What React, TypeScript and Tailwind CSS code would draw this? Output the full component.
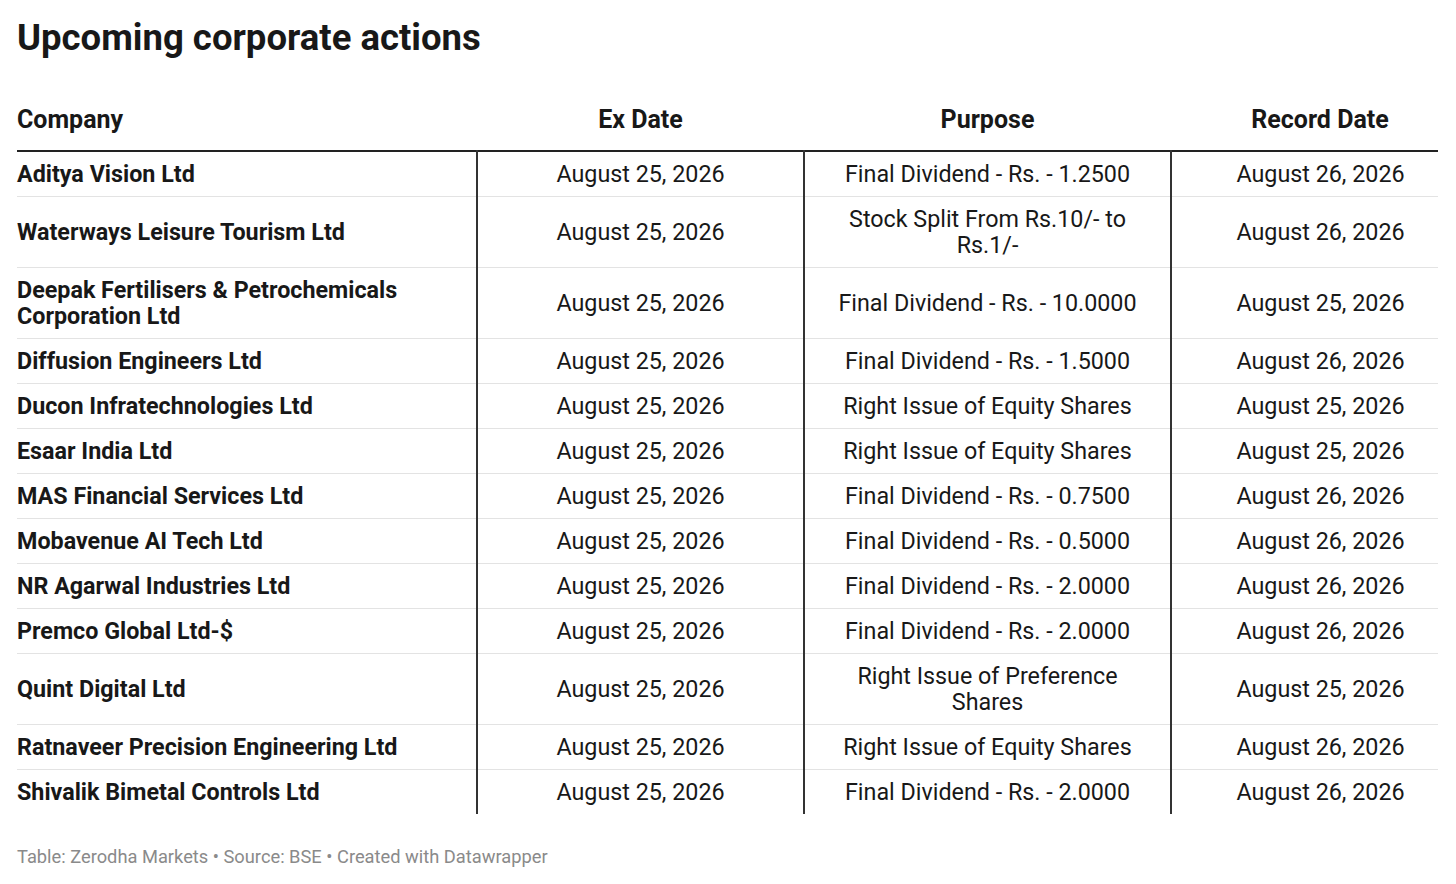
const rows: [string, string, string, string][] = [
  ["Aditya Vision Ltd", "August 25, 2026", "Final Dividend - Rs. - 1.2500", "August 26, 2026"],
  ["Waterways Leisure Tourism Ltd", "August 25, 2026", "Stock Split From Rs.10/- to Rs.1/-", "August 26, 2026"],
  ["Deepak Fertilisers & Petrochemicals Corporation Ltd", "August 25, 2026", "Final Dividend - Rs. - 10.0000", "August 25, 2026"],
  ["Diffusion Engineers Ltd", "August 25, 2026", "Final Dividend - Rs. - 1.5000", "August 26, 2026"],
  ["Ducon Infratechnologies Ltd", "August 25, 2026", "Right Issue of Equity Shares", "August 25, 2026"],
  ["Esaar India Ltd", "August 25, 2026", "Right Issue of Equity Shares", "August 25, 2026"],
  ["MAS Financial Services Ltd", "August 25, 2026", "Final Dividend - Rs. - 0.7500", "August 26, 2026"],
  ["Mobavenue AI Tech Ltd", "August 25, 2026", "Final Dividend - Rs. - 0.5000", "August 26, 2026"],
  ["NR Agarwal Industries Ltd", "August 25, 2026", "Final Dividend - Rs. - 2.0000", "August 26, 2026"],
  ["Premco Global Ltd-$", "August 25, 2026", "Final Dividend - Rs. - 2.0000", "August 26, 2026"],
  ["Quint Digital Ltd", "August 25, 2026", "Right Issue of Preference Shares", "August 25, 2026"],
  ["Ratnaveer Precision Engineering Ltd", "August 25, 2026", "Right Issue of Equity Shares", "August 26, 2026"],
  ["Shivalik Bimetal Controls Ltd", "August 25, 2026", "Final Dividend - Rs. - 2.0000", "August 26, 2026"],
];

export default function App() {
  return (
    <div
      className="min-h-screen bg-white pl-[17px] pt-[16px] text-[#181818]"
      style={{ fontFamily: "Roboto, 'Liberation Sans', sans-serif" }}
    >
      <h1 className="text-[36.5px] font-bold leading-[44px]">Upcoming corporate actions</h1>

      <table className="mt-[46px] w-[1421px] table-fixed border-collapse">
        <colgroup>
          <col className="w-[460px]" />
          <col className="w-[327px]" />
          <col className="w-[367px]" />
          <col className="w-[267px]" />
        </colgroup>
        <thead>
          <tr className="border-b-[2px] border-[#222]">
            <th className="pb-[16px] pr-4 text-left align-bottom text-[25px] font-bold leading-[28px]">Company</th>
            <th className="px-4 pb-[16px] text-center align-bottom text-[25px] font-bold leading-[28px]">Ex Date</th>
            <th className="px-4 pb-[16px] text-center align-bottom text-[25px] font-bold leading-[28px]">Purpose</th>
            <th className="pl-[31px] pb-[16px] text-center align-bottom text-[25px] font-bold leading-[28px]">Record Date</th>
          </tr>
        </thead>
        <tbody>
          {rows.map((r, i) => (
            <tr key={i} className={i < rows.length - 1 ? "border-b border-[#e3e3e3]" : ""}>
              <td className="py-[9px] pr-4 text-left align-middle text-[23.3px] font-bold leading-[26px]">{r[0]}</td>
              <td className="border-l-[2px] border-l-[#333] px-4 py-[9px] text-center align-middle text-[23.3px] leading-[26px]">{r[1]}</td>
              <td className="border-l-[2px] border-l-[#333] px-4 py-[9px] text-center align-middle text-[23.3px] leading-[26px]">{r[2]}</td>
              <td className="border-l-[2px] border-l-[#333] py-[9px] pl-[31px] text-center align-middle text-[23.3px] leading-[26px]">{r[3]}</td>
            </tr>
          ))}
        </tbody>
      </table>

      <p className="mt-[32px] text-[18.3px] leading-[21px] text-[#8a8a8a]">
        Table: Zerodha Markets • Source: BSE • Created with Datawrapper
      </p>
    </div>
  );
}
